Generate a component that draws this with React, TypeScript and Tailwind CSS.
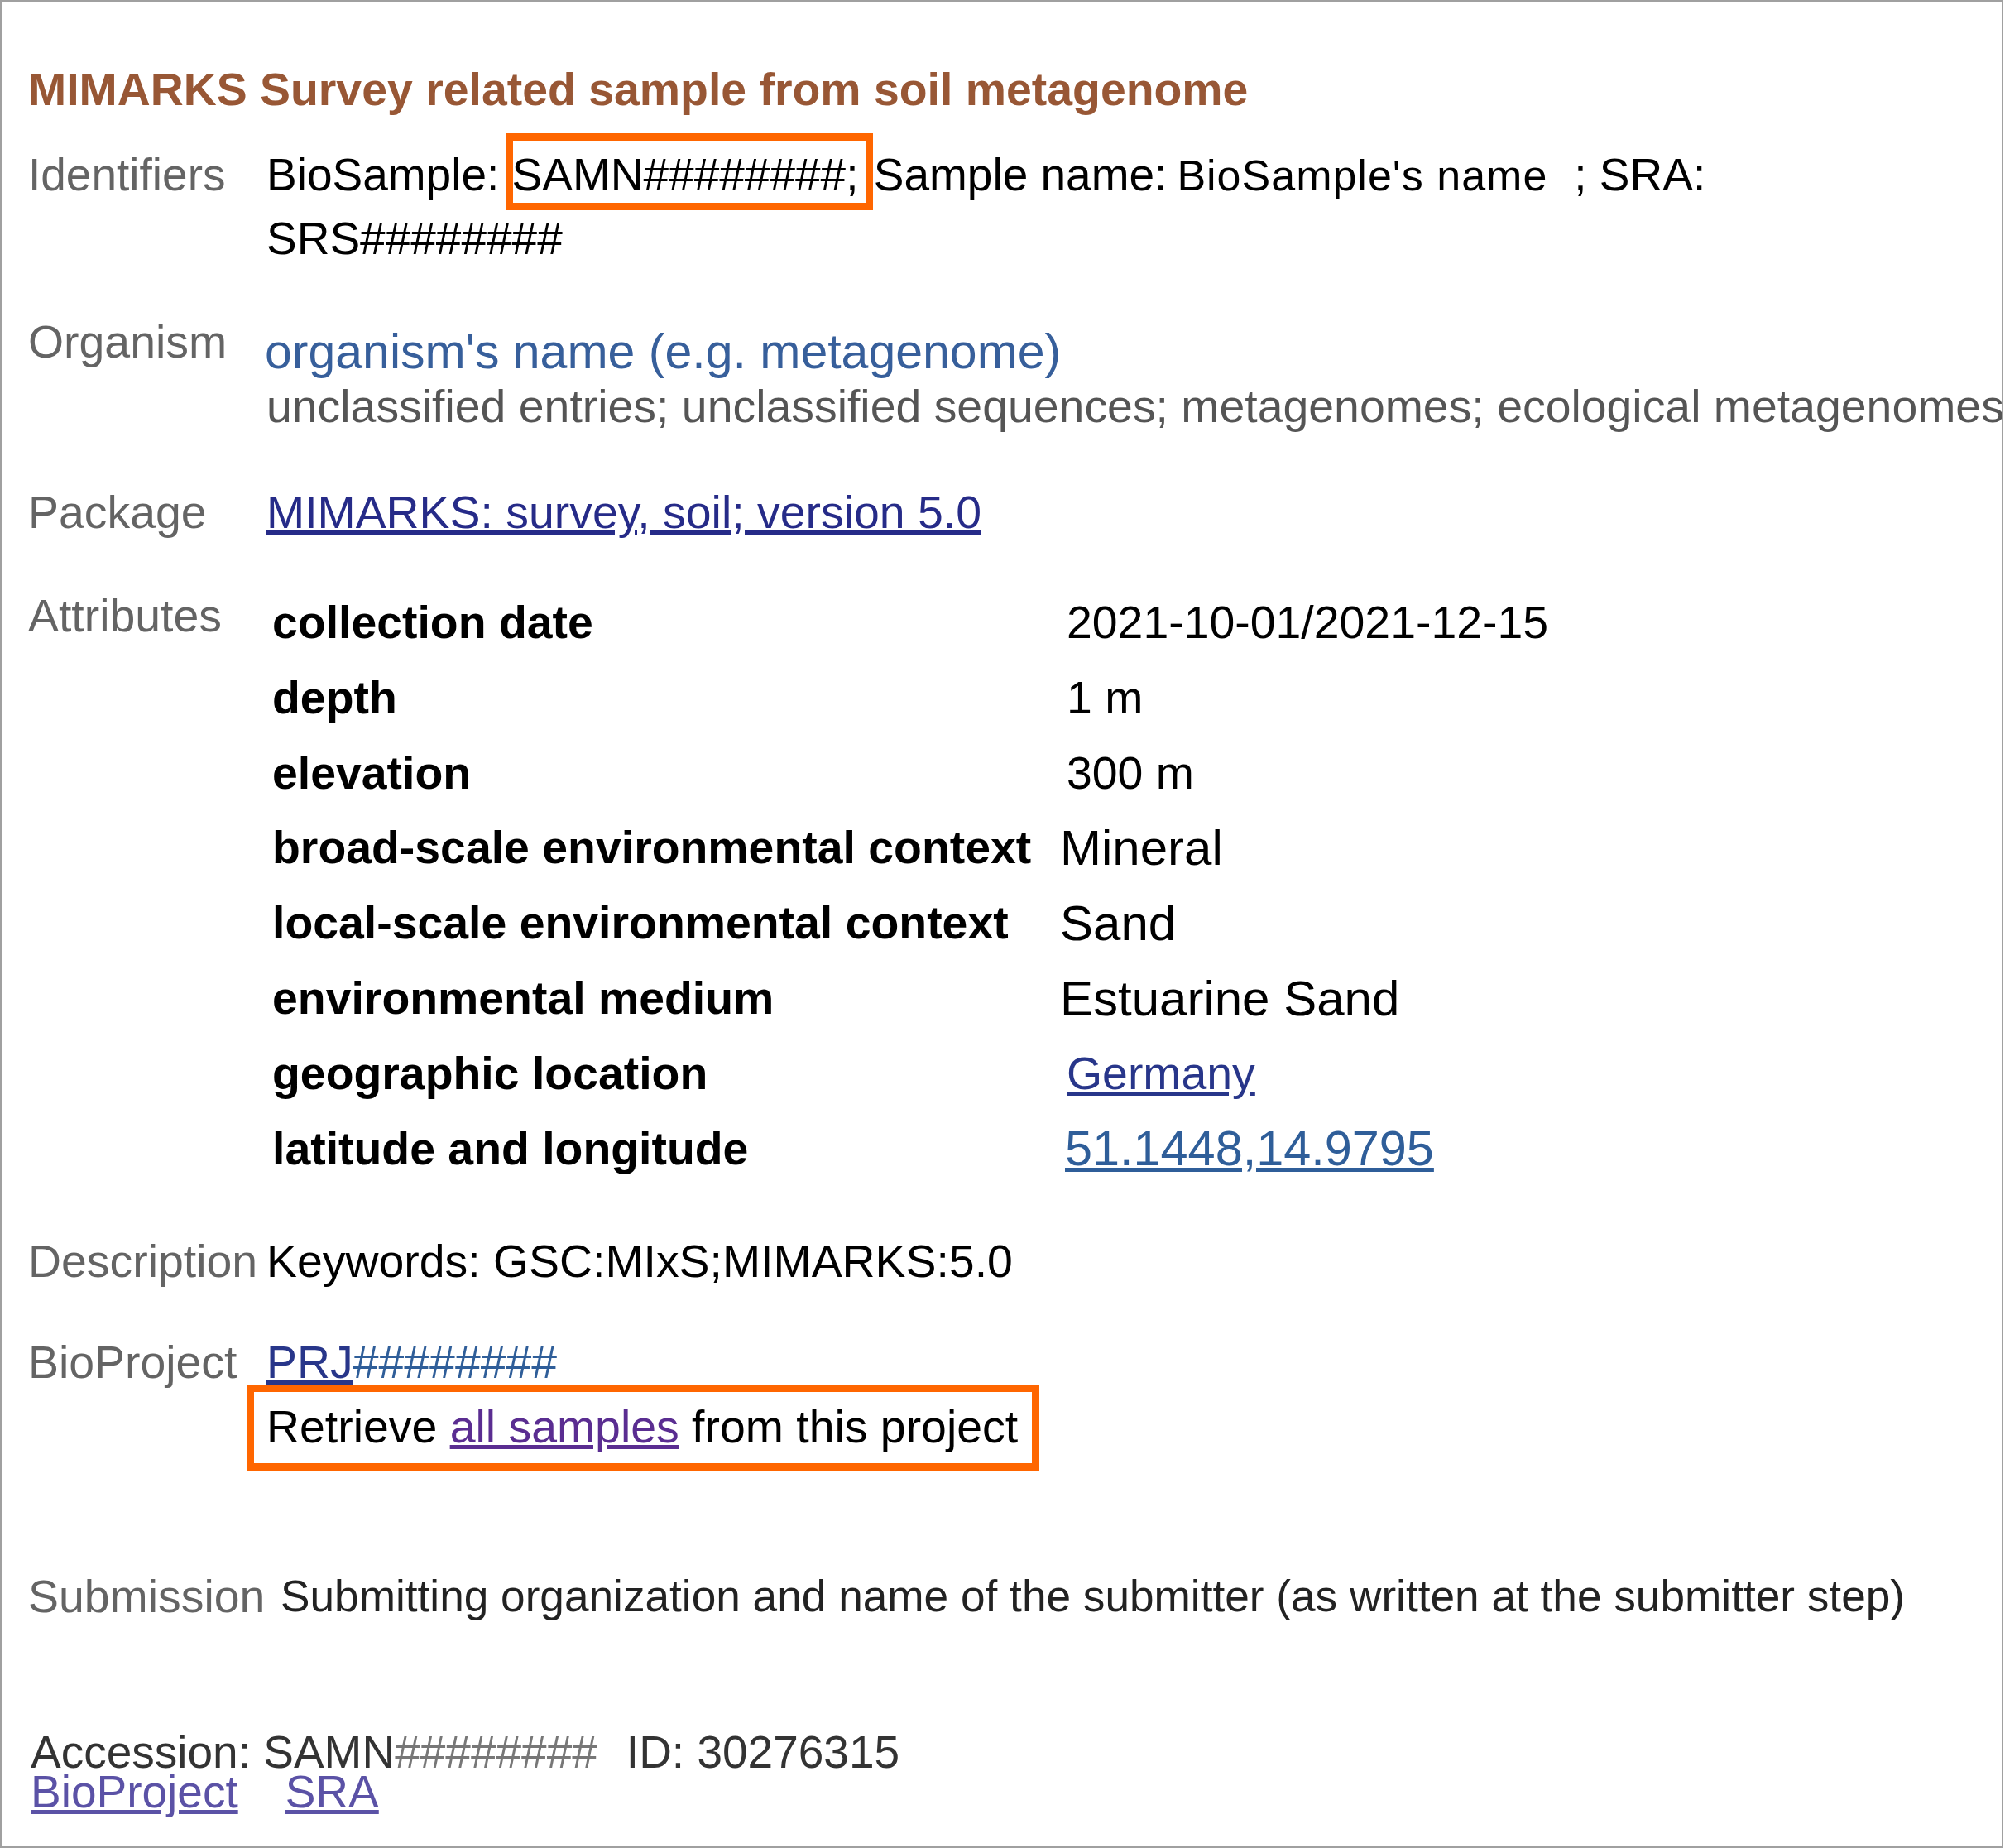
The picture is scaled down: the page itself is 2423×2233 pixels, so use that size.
export default function App() {
  return (
    <div className="w-[2423px] h-[2233px] bg-white">
      <div className="box-border w-[2421px] h-[2233px] border-2 border-[#a0a0a0] bg-white pl-[32px] pt-[76px] overflow-hidden font-['Liberation_Sans',Arial,Helvetica,sans-serif] text-black">
        <h1 className="text-[55.4px] leading-[60px] font-bold text-[#985735]">
          MIMARKS Survey related sample from soil metagenome
        </h1>

        <div className="mt-[35px] flex text-[55px] leading-[76px]">
          <div className="w-[288px] shrink-0 text-[#646464]">Identifiers</div>
          <div>
            BioSample:{" "}
            <span className="relative">
              SAMN########;
              <span className="absolute -left-[8px] -right-[18px] -top-[19px] -bottom-[12px] border-[9px] border-[#ff6600]" />
            </span>{" "}
            <span className="ml-[3px]">Sample name:</span>
            <span className="ml-[12px] text-[52px] tracking-[1px]">BioSample's name</span>
            <span className="ml-[32px]">; SRA:</span>
            <br />
            SRS########
          </div>
        </div>

        <div className="mt-[57px] flex">
          <div className="w-[288px] shrink-0 text-[55.4px] leading-[60px] text-[#646464]">Organism</div>
          <div className="mt-[10px]">
            <div className="ml-[-2px] text-[59px] leading-[64px] text-[#375f9b]">
              organism's name (e.g. metagenome)
            </div>
            <div className="text-[55.4px] leading-[68px] text-[#555555] whitespace-nowrap">
              unclassified entries; unclassified sequences; metagenomes; ecological metagenomes
            </div>
          </div>
        </div>

        <div className="mt-[64px] flex text-[55.4px] leading-[60px]">
          <div className="w-[288px] shrink-0 text-[#646464]">Package</div>
          <a className="underline text-[#262b88]">MIMARKS: survey, soil; version 5.0</a>
        </div>

        <div className="mt-[58px] flex">
          <div className="w-[288px] shrink-0 mt-[7px] text-[55.4px] leading-[60px] text-[#646464]">Attributes</div>
          <div className="ml-[7px] grid grid-cols-[952px_auto]">
            <div className="font-bold text-[55.4px] leading-[90.8px]">collection date</div>
            <div className="pl-[8px] text-[55.4px] leading-[90.8px]">2021-10-01/2021-12-15</div>

            <div className="font-bold text-[55.4px] leading-[90.8px]">depth</div>
            <div className="pl-[8px] text-[55.4px] leading-[90.8px]">1 m</div>

            <div className="font-bold text-[55.4px] leading-[90.8px]">elevation</div>
            <div className="pl-[8px] text-[55.4px] leading-[90.8px]">300 m</div>

            <div className="font-bold text-[55.4px] leading-[90.8px]">broad-scale environmental context</div>
            <div className="pt-[3px] text-[60px] leading-[86px]">Mineral</div>

            <div className="font-bold text-[55.4px] leading-[90.8px]">local-scale environmental context</div>
            <div className="pt-[3px] text-[60px] leading-[86px]">Sand</div>

            <div className="font-bold text-[55.4px] leading-[90.8px]">environmental medium</div>
            <div className="pt-[3px] text-[60px] leading-[86px]">Estuarine Sand</div>

            <div className="font-bold text-[55.4px] leading-[90.8px]">geographic location</div>
            <div className="pl-[8px] text-[55.4px] leading-[90.8px]">
              <a className="underline text-[#28368a]">Germany</a>
            </div>

            <div className="font-bold text-[55.4px] leading-[90.8px]">latitude and longitude</div>
            <div className="pl-[6px] pt-[1px] text-[59.4px] leading-[87px]">
              <a className="underline text-[#2f5e99]">51.1448,14.9795</a>
            </div>
          </div>
        </div>

        <div className="mt-[61px] flex text-[55.4px] leading-[60px]">
          <div className="w-[288px] shrink-0 text-[#646464]">Description</div>
          <div>Keywords: GSC:MIxS;MIMARKS:5.0</div>
        </div>

        <div className="mt-[53px] flex text-[55.4px] leading-[78px]">
          <div className="w-[288px] shrink-0 text-[#646464]">BioProject</div>
          <div>
            <div>
              <a className="underline text-[#28368a]">PRJ</a>
              <span className="text-[#2f5e99]">########</span>
            </div>
            <div className="relative w-fit">
              Retrieve <a className="underline text-[#5a2d91]">all samples</a> from this project
              <span className="absolute -left-[24px] -right-[26px] -top-[12px] -bottom-[14px] border-[9px] border-[#ff6600]" />
            </div>
          </div>
        </div>

        <div className="mt-[136px] flex leading-[60px]">
          <div className="w-[305px] shrink-0 text-[55.4px] text-[#646464]">Submission</div>
          <div className="text-[53.2px] text-[#222222]">
            Submitting organization and name of the submitter (as written at the submitter step)
          </div>
        </div>

        <div className="mt-[134px] pl-[3px] text-[55px] leading-[48px] text-[#333333]">
          <div>
            Accession: SAMN<span className="text-[#777777]">########</span>
            <span className="ml-[35px]">ID: 30276315</span>
          </div>
          <div>
            <a className="underline text-[#5b52a6]">BioProject</a>
            <a className="ml-[57px] underline text-[#5b52a6]">SRA</a>
          </div>
        </div>
      </div>
    </div>
  );
}
